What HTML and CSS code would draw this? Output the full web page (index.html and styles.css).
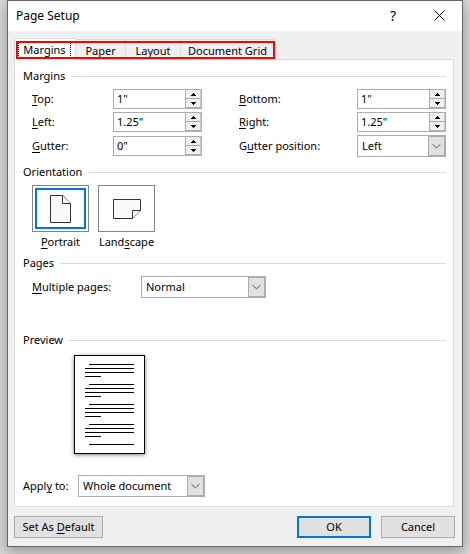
FILE: index.html
```html
<!DOCTYPE html>
<html lang="en">
<head>
    <meta charset="UTF-8">
    <meta name="viewport" content="width=device-width, initial-scale=1.0">
    <title>Page Setup</title>
    <link rel="stylesheet" href="styles.css">
</head>
<body>
    <div class="dialog" role="dialog" aria-labelledby="dialog-title">
        <div class="title-bar">
            <h1 id="dialog-title">Page Setup</h1>
            <button class="title-button" type="button" aria-label="Help">?</button>
            <button class="title-button" type="button" aria-label="Close">
                <svg width="11" height="11" viewBox="0 0 11 11"><path d="M0.5 0.5 L10.5 10.5 M10.5 0.5 L0.5 10.5" /></svg>
            </button>
        </div>

        <form class="content">
            <div class="tabs" role="tablist">
                <button class="tab active" type="button" role="tab"><span>Margins</span></button>
                <button class="tab" type="button" role="tab">Paper</button>
                <button class="tab" type="button" role="tab">Layout</button>
                <button class="tab wide" type="button" role="tab">Document Grid</button>
                <div class="highlight"></div>
            </div>

            <div class="panel">
                <h2>Margins</h2>
                <div class="margins">
                    <div class="field">
                        <label for="top"><u>T</u>op:</label>
                        <div class="spinner">
                            <input type="text" id="top" value='1"'>
                            <div class="arrows">
                                <button type="button" aria-label="Increase top"><svg width="5" height="3" viewBox="0 0 5 3"><path d="M2 0h1v1h1v1h1v1H0V2h1V1h1z" /></svg></button>
                                <button type="button" aria-label="Decrease top"><svg width="5" height="3" viewBox="0 0 5 3"><path d="M0 0h5v1H4v1H3v1H2V2H1V1H0z" /></svg></button>
                            </div>
                        </div>
                    </div>
                    <div class="field">
                        <label for="bottom"><u>B</u>ottom:</label>
                        <div class="spinner">
                            <input type="text" id="bottom" value='1"'>
                            <div class="arrows">
                                <button type="button" aria-label="Increase bottom"><svg width="5" height="3" viewBox="0 0 5 3"><path d="M2 0h1v1h1v1h1v1H0V2h1V1h1z" /></svg></button>
                                <button type="button" aria-label="Decrease bottom"><svg width="5" height="3" viewBox="0 0 5 3"><path d="M0 0h5v1H4v1H3v1H2V2H1V1H0z" /></svg></button>
                            </div>
                        </div>
                    </div>
                    <div class="field">
                        <label for="left"><u>L</u>eft:</label>
                        <div class="spinner">
                            <input type="text" id="left" value='1.25"'>
                            <div class="arrows">
                                <button type="button" aria-label="Increase left"><svg width="5" height="3" viewBox="0 0 5 3"><path d="M2 0h1v1h1v1h1v1H0V2h1V1h1z" /></svg></button>
                                <button type="button" aria-label="Decrease left"><svg width="5" height="3" viewBox="0 0 5 3"><path d="M0 0h5v1H4v1H3v1H2V2H1V1H0z" /></svg></button>
                            </div>
                        </div>
                    </div>
                    <div class="field">
                        <label for="right"><u>R</u>ight:</label>
                        <div class="spinner">
                            <input type="text" id="right" value='1.25"'>
                            <div class="arrows">
                                <button type="button" aria-label="Increase right"><svg width="5" height="3" viewBox="0 0 5 3"><path d="M2 0h1v1h1v1h1v1H0V2h1V1h1z" /></svg></button>
                                <button type="button" aria-label="Decrease right"><svg width="5" height="3" viewBox="0 0 5 3"><path d="M0 0h5v1H4v1H3v1H2V2H1V1H0z" /></svg></button>
                            </div>
                        </div>
                    </div>
                    <div class="field">
                        <label for="gutter"><u>G</u>utter:</label>
                        <div class="spinner">
                            <input type="text" id="gutter" value='0"'>
                            <div class="arrows">
                                <button type="button" aria-label="Increase gutter"><svg width="5" height="3" viewBox="0 0 5 3"><path d="M2 0h1v1h1v1h1v1H0V2h1V1h1z" /></svg></button>
                                <button type="button" aria-label="Decrease gutter"><svg width="5" height="3" viewBox="0 0 5 3"><path d="M0 0h5v1H4v1H3v1H2V2H1V1H0z" /></svg></button>
                            </div>
                        </div>
                    </div>
                    <div class="field">
                        <label for="gutter-position">G<u>u</u>tter position:</label>
                        <div class="dropdown small">
                            <select id="gutter-position">
                                <option>Left</option>
                                <option>Top</option>
                            </select>
                            <svg width="17" height="20" viewBox="0 0 17 20"><path d="M4 8 L8.5 12 L13 8" /></svg>
                        </div>
                    </div>
                </div>

                <h2>Orientation</h2>
                <div class="orientation">
                    <button class="option selected" type="button">
                        <span class="thumb">
                            <svg width="21" height="28" viewBox="0 0 21 28"><path d="M0.5 0.5 H13 L20.5 8.5 V27.5 H0.5 Z" /><path d="M12.5 0.5 V8.5 H20.5" /></svg>
                        </span>
                        <span><u>P</u>ortrait</span>
                    </button>
                    <button class="option" type="button">
                        <span class="thumb">
                            <svg width="28" height="20" viewBox="0 0 28 20"><path d="M0.5 0.5 H27.5 V11.5 L19.5 19.5 H0.5 Z" /><path d="M27.5 11.5 H19.5 V19.5" /></svg>
                        </span>
                        <span>Land<u>s</u>cape</span>
                    </button>
                </div>

                <h2>Pages</h2>
                <div class="pages">
                    <label for="multiple-pages"><u>M</u>ultiple pages:</label>
                    <div class="dropdown">
                        <select id="multiple-pages">
                            <option>Normal</option>
                            <option>Mirror margins</option>
                            <option>2 pages per sheet</option>
                            <option>Book fold</option>
                        </select>
                        <svg width="17" height="20" viewBox="0 0 17 20"><path d="M4 8 L8.5 12 L13 8" /></svg>
                    </div>
                </div>

                <h2>Preview</h2>
                <svg class="sheet" width="71" height="99" viewBox="0 0 71 99">
                    <rect x="0.5" y="0.5" width="70" height="98" />
                    <path d="M15 9.5H60 M11 13.5H60 M11 17.5H60 M11 21.5H27" />
                    <path d="M15 29.5H60 M11 33.5H60 M11 37.5H60 M11 41.5H27" />
                    <path d="M15 49.5H60 M11 53.5H60 M11 57.5H60 M11 61.5H27" />
                    <path d="M15 69.5H60 M11 73.5H60 M11 77.5H60 M11 81.5H27" />
                    <path d="M15 89.5H60" />
                </svg>

                <div class="apply">
                    <label for="apply-to">Appl<u>y</u> to:</label>
                    <div class="dropdown">
                        <select id="apply-to">
                            <option>Whole document</option>
                            <option>This point forward</option>
                        </select>
                        <svg width="17" height="20" viewBox="0 0 17 20"><path d="M4 8 L8.5 12 L13 8" /></svg>
                    </div>
                </div>
            </div>

            <div class="buttons">
                <button class="button set-default" type="button">Set As <u>D</u>efault</button>
                <button class="button primary" type="submit">OK</button>
                <button class="button" type="button">Cancel</button>
            </div>
        </form>
    </div>
</body>
</html>
```
FILE: styles.css
```css
* {
    margin: 0;
    padding: 0;
    box-sizing: border-box;
}
body {
    padding: 0 7px 7px;
    background-color: #d9d9d9;
    font-family: "Noto Sans", sans-serif;
    font-size: 11px;
    line-height: 16px;
    color: black;
}
button,
input,
select {
    font: inherit;
    color: inherit;
}
button {
    border: none;
    background: none;
}
u {
    text-underline-offset: 2px;
}
.dialog {
    background-color: #f0f0f0;
    border: 1px solid #666;
    box-shadow: 0 4px 14px rgba(0, 0, 0, 0.35);
}
.title-bar {
    display: flex;
    align-items: center;
    height: 30px;
    padding-left: 8px;
    background-color: white;
}
.title-bar h1 {
    flex: 1;
    font-size: 12px;
    font-weight: normal;
}
.title-button {
    width: 46px;
    height: 30px;
    font-size: 14px;
}
.title-button svg {
    fill: none;
    stroke: black;
}
.content {
    padding: 7px 7px 8px 6px;
}
.tabs {
    display: flex;
    align-items: flex-end;
    position: relative;
    width: 261px;
    height: 22px;
    margin-bottom: -1px;
}
.tab {
    flex: 1 1 auto;
    height: 20px;
    margin-bottom: 1px;
    padding-top: 2px;
    border: 1px solid #dcdcdc;
    border-left: none;
    border-bottom: none;
}
.tab.active {
    flex: 0 0 62px;
    height: 22px;
    margin-bottom: 0;
    padding: 2px 4px 1px 3px;
    background-color: white;
    border-left: 1px solid #dcdcdc;
}
.tab.active span {
    display: block;
    border-left: 1px dotted black;
    border-right: 1px dotted black;
}
.tab.wide {
    flex: none;
    padding-left: 7px;
    padding-right: 7px;
}
/* red frame drawn around the tab names */
.highlight {
    position: absolute;
    inset: 3px 0 1px 2px;
    border: 2px solid red;
    pointer-events: none;
}
.panel {
    margin-right: 1px;
    padding: 8px 7px 9px 8px;
    background-color: white;
    border: 1px solid #dcdcdc;
}
h2 {
    display: flex;
    align-items: center;
    gap: 6px;
    font-size: 11px;
    font-weight: normal;
}
h2::after {
    content: "";
    flex: 1;
    height: 1px;
    background-color: #dcdcdc;
}
.margins {
    display: grid;
    grid-template-columns: 170px 1fr;
    grid-template-rows: 20px 20px 22px;
    gap: 3px 37px;
    padding: 5px 0 7px 9px;
}
.field {
    display: flex;
    align-items: center;
    justify-content: space-between;
}
.spinner {
    display: flex;
    width: 89px;
    height: 20px;
    border: 1px solid #abadb3;
}
.spinner input {
    flex: 1;
    min-width: 0;
    padding-left: 3px;
    border: none;
}
.arrows {
    display: flex;
    flex-direction: column;
    width: 16px;
}
.arrows button {
    display: flex;
    flex: 1;
    align-items: center;
    justify-content: center;
    background-color: #f0f0f0;
    border: 1px solid #abadb3;
    border-top: none;
    border-right-color: #ccc;
}
.arrows svg {
    fill: black;
}
.dropdown {
    display: flex;
    position: relative;
    width: 125px;
    height: 22px;
}
.dropdown.small {
    width: 89px;
}
.dropdown select {
    appearance: none;
    width: 100%;
    padding-left: 4px;
    background-color: white;
    border: 1px solid #abadb3;
}
/* arrow box lies over the right end of the select */
.dropdown svg {
    position: absolute;
    top: 1px;
    right: 1px;
    fill: none;
    stroke: #444;
    background-color: #e1e1e1;
    border: 1px solid #abadb3;
    pointer-events: none;
}
.orientation {
    display: flex;
    gap: 9px;
    padding: 5px 9px 5px;
}
.option {
    display: flex;
    flex-direction: column;
    align-items: center;
    gap: 2px;
    width: 57px;
}
.thumb {
    display: flex;
    align-items: center;
    justify-content: center;
    width: 57px;
    height: 47px;
    border: 1px solid #83858c;
}
.thumb svg {
    fill: #fafafa;
    stroke: #333;
}
.selected .thumb {
    outline: 2px solid #0078d7;
    outline-offset: -5px;
}
.pages {
    display: flex;
    align-items: center;
    padding: 5px 9px 34px;
}
.pages label {
    width: 109px;
}
.sheet {
    display: block;
    margin: 7px 51px 21px;
    fill: white;
    stroke: black;
    box-shadow: 0 1px 4px rgba(0, 0, 0, 0.5);
}
.apply {
    display: flex;
    align-items: center;
}
.apply label {
    width: 55px;
}
.apply .dropdown {
    width: 127px;
}
.buttons {
    display: flex;
    gap: 10px;
    padding-top: 9px;
}
.button {
    width: 74px;
    height: 22px;
    background-color: #e1e1e1;
    border: 1px solid #adadad;
}
.button.set-default {
    width: 89px;
    margin-right: auto;
}
.button.primary {
    border: 2px solid #0078d7;
}
```
